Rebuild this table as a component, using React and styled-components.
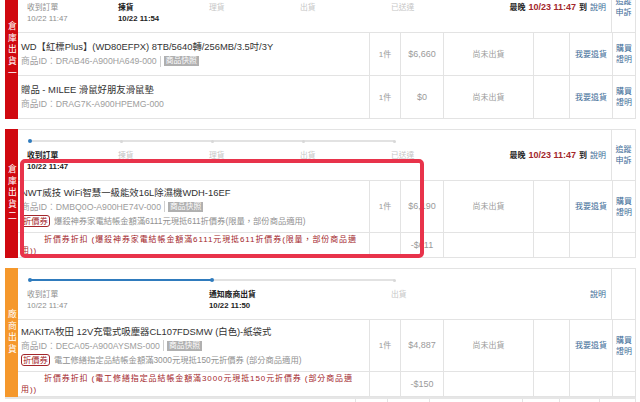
import React from 'react'
import styled, { createGlobalStyle } from 'styled-components'

const c = {
  red: '#d0080f',
  orange: '#f5982c',
  blue: '#2f7bbd',
  track: '#e2e2e2',
  line: '#e3e3e3',
  text: '#333',
  gray: '#8e8e8e',
  light: '#c6c6c6',
  wine: '#a3262b',
  link: '#3b6a96',
  alert: '#e8334b',
}

const GlobalStyle = createGlobalStyle`
  html, body {
    margin: 0;
    padding: 0;
    background: #fff;
    overflow: hidden;
  }
  body {
    font-family: "Liberation Sans", Arial, "Noto Sans CJK TC", sans-serif;
    color: ${c.text};
  }
`

const Page = styled.div`
  width: 631px;
  padding-left: 5px;
  margin-top: -19px;
  display: flex;
  flex-direction: column;
`

const Block = styled.div`
  position: relative;
  display: flex;
  margin-bottom: ${p => (p.$flush ? 0 : 10)}px;
`

const Bar = styled.div`
  width: 13px;
  flex: none;
  background: ${p => (p.$tone === 'orange' ? c.orange : c.red)};
  color: #fff;
  display: flex;
  align-items: center;
  justify-content: center;
`

const BarText = styled.span`
  writing-mode: vertical-rl;
  text-orientation: upright;
  font-size: 8.8px;
  letter-spacing: 3px;
  line-height: 13px;
`

const Table = styled.div`
  flex: 1;
  border-top: 1px solid ${c.line};
  border-right: 1px solid ${c.line};
`

const Head = styled.div`
  display: grid;
  grid-template-columns: 1fr 24px;
  height: 50px;
  border-bottom: 1px solid ${c.line};
`

const HeadMain = styled.div`
  display: flex;
  align-items: flex-start;
  padding: 0 5px 0 9px;
`

const HeadAside = styled.div`
  border-left: 1px solid ${c.line};
  display: flex;
  align-items: center;
  justify-content: center;
  font-size: 8px;
  line-height: 11px;
  color: ${c.link};
  text-align: center;
`

const Steps = styled.div`
  display: flex;
  padding-top: 20px;
`

const stepColor = { done: c.gray, current: '#222', todo: c.light }

const Step = styled.div`
  position: relative;
  flex: none;
  width: ${p => (p.$w ? `${p.$w}px` : 'auto')};
  font-size: 7.8px;
  line-height: 11px;
  color: ${p => stepColor[p.$state]};
  font-weight: ${p => (p.$state === 'current' ? 700 : 400)};
  white-space: nowrap;

  &::before {
    content: '';
    display: ${p => (p.$w ? 'block' : 'none')};
    position: absolute;
    top: -10px;
    left: 3px;
    width: ${p => p.$w || 0}px;
    height: 2px;
    background: ${p => (p.$fill ? c.blue : c.track)};
  }

  &::after {
    content: '';
    position: absolute;
    top: ${p => (p.$state === 'todo' ? -10.5 : -11)}px;
    left: ${p => (p.$state === 'todo' ? 1.5 : 1)}px;
    width: ${p => (p.$state === 'todo' ? 3 : 4)}px;
    height: ${p => (p.$state === 'todo' ? 3 : 4)}px;
    border-radius: 50%;
    background: ${p => (p.$state === 'todo' ? '#d8d8d8' : c.blue)};
  }
`

const StepTime = styled.div`
  font-size: 7.8px;
`

const Deadline = styled.div`
  margin-left: auto;
  padding-top: 20px;
  font-size: 8px;
  line-height: 11px;
  white-space: nowrap;
  display: flex;
  align-items: baseline;
  gap: 3px;
`

const Strong = styled.b`
  color: #222;
`

const Due = styled.b`
  color: ${c.wine};
  font-size: 9px;
`

const Link = styled.span`
  color: ${c.link};
`

const Row = styled.div`
  display: grid;
  grid-template-columns: 351px 31px 43px 90px 36px 43px 1fr;
  min-height: ${p => p.$min || 42}px;
  border-bottom: 1px solid ${c.line};
`

const Cell = styled.div`
  border-left: 1px solid ${c.line};
  display: flex;
  align-items: center;
  justify-content: center;
  text-align: center;
  font-size: ${p => (p.$num ? 9 : 8)}px;
  line-height: 11px;
  color: ${p => (p.$link ? c.link : '#9a9a9a')};

  &:first-child {
    border-left: none;
  }
`

const Product = styled.div`
  display: flex;
  flex-direction: column;
  justify-content: center;
  padding: 4px 4px 4px 3px;
`

const Name = styled.div`
  font-size: 9.4px;
  line-height: 14px;
  color: ${c.text};
  white-space: nowrap;
`

const Meta = styled.div`
  display: flex;
  align-items: center;
  font-size: 8.7px;
  line-height: 14px;
  color: #9d9d9d;
  white-space: nowrap;
`

const Snapshot = styled.span`
  margin-left: 3px;
  padding-left: 3px;
  border-left: 1px solid #cfcfcf;
  display: flex;
  align-items: center;
  height: 11px;

  span {
    background: #b0b0b0;
    color: #fff;
    font-size: 7.8px;
    line-height: 10px;
    padding: 0 2px;
  }
`

const Coupon = styled.div`
  display: flex;
  align-items: center;
  font-size: 8.3px;
  line-height: 14px;
  color: #909090;
  white-space: nowrap;
`

const CouponTag = styled.span`
  border: 1px solid ${c.wine};
  border-radius: 3px;
  color: ${c.wine};
  font-size: 8.3px;
  line-height: 10px;
  padding: 0 1px;
  margin-right: 4px;
`

const Discount = styled.div`
  padding: 1px 9px 0 3px;
  text-indent: 23px;
  font-size: 8px;
  line-height: 11px;
  letter-spacing: 0.9px;
  color: ${c.wine};
`

const Highlight = styled.div`
  position: absolute;
  top: 30px;
  left: 15px;
  width: 404px;
  height: 99px;
  box-sizing: border-box;
  border: 4.5px solid ${c.alert};
  border-radius: 5px;
  pointer-events: none;
  z-index: 2;
`

const Tail = styled.div`
  display: grid;
  grid-template-columns: 350px 32px 42px 93px 37px 40px 37px;
  height: 8px;
  border-top: 2px solid #e6e6e6;
`

const TailCell = styled.div`
  border-left: 1px solid ${c.line};
  &:first-child {
    border-left: none;
  }
  &:last-child {
    border-right: 1px solid ${c.line};
  }
`

const blocks = [
  {
    tone: 'red',
    label: '倉庫出貨一',
    stepWidth: 91,
    steps: [
      { name: '收到訂單', time: '10/22 11:47', state: 'done' },
      { name: '揀貨', time: '10/22 11:54', state: 'current' },
      { name: '理貨', state: 'todo' },
      { name: '出貨', state: 'todo' },
      { name: '已送達', state: 'todo' },
    ],
    deadline: '10/23 11:47',
    appeal: true,
    items: [
      {
        name: 'WD【紅標Plus】(WD80EFPX) 8TB/5640轉/256MB/3.5吋/3Y',
        id: 'DRAB46-A900HA649-000',
        snapshot: true,
        price: '$6,660',
      },
      {
        name: '贈品 - MILEE 滑鼠好朋友滑鼠墊',
        id: 'DRAG7K-A900HPEMG-000',
        price: '$0',
      },
    ],
  },
  {
    tone: 'red',
    label: '倉庫出貨二',
    stepWidth: 91,
    steps: [
      { name: '收到訂單', time: '10/22 11:47', state: 'current' },
      { name: '揀貨', state: 'todo' },
      { name: '理貨', state: 'todo' },
      { name: '出貨', state: 'todo' },
      { name: '已送達', state: 'todo' },
    ],
    deadline: '10/23 11:47',
    appeal: true,
    highlight: true,
    items: [
      {
        name: 'NWT威技 WiFi智慧一級能效16L除濕機WDH-16EF',
        id: 'DMBQ0O-A900HE74V-000',
        snapshot: true,
        price: '$6,190',
        coupon: '爆殺神券家電結帳金額滿6111元現抵611折價券(限量，部份商品適用)',
        off: '-$611',
      },
    ],
  },
  {
    tone: 'orange',
    label: '廠商出貨',
    stepWidth: 182,
    steps: [
      { name: '收到訂單', time: '10/22 11:47', state: 'done' },
      { name: '通知廠商出貨', time: '10/22 11:50', state: 'current' },
      { name: '出貨', state: 'todo' },
    ],
    flush: true,
    items: [
      {
        name: 'MAKITA牧田 12V充電式吸塵器CL107FDSMW (白色)-紙袋式',
        id: 'DECA05-A900AYSMS-000',
        snapshot: true,
        price: '$4,887',
        coupon: '電工修繕指定品結帳金額滿3000元現抵150元折價券 (部分商品適用)',
        off: '-$150',
      },
    ],
  },
]

function Progress({ steps, width }) {
  return (
    <Steps>
      {steps.map((s, i) => {
        const next = steps[i + 1]
        return (
          <Step
            key={s.name}
            $w={next ? width : 0}
            $state={s.state}
            $fill={next && next.state !== 'todo'}
          >
            <div>{s.name}</div>
            {s.time && <StepTime>{s.time}</StepTime>}
          </Step>
        )
      })}
    </Steps>
  )
}

function Item({ item }) {
  return (
    <>
      <Row $min={item.coupon ? 51 : 42}>
        <Product>
          <Name>{item.name}</Name>
          <Meta>
            商品ID：{item.id}
            {item.snapshot && (
              <Snapshot>
                <span>商品快照</span>
              </Snapshot>
            )}
          </Meta>
          {item.coupon && (
            <Coupon>
              <CouponTag>折價券</CouponTag>
              {item.coupon}
            </Coupon>
          )}
        </Product>
        <Cell>1件</Cell>
        <Cell $num>{item.price}</Cell>
        <Cell>尚未出貨</Cell>
        <Cell />
        <Cell $link>我要退貨</Cell>
        <Cell $link>購買證明</Cell>
      </Row>
      {item.coupon && (
        <Row $min={24}>
          <Discount>折價券折扣 ({item.coupon})</Discount>
          <Cell />
          <Cell $num>{item.off}</Cell>
          <Cell />
          <Cell />
          <Cell />
          <Cell />
        </Row>
      )}
    </>
  )
}

export default function App() {
  return (
    <>
      <GlobalStyle />
      <Page>
        {blocks.map(b => (
          <Block key={b.label} $flush={b.flush}>
            <Bar $tone={b.tone}>
              <BarText>{b.label}</BarText>
            </Bar>
            <Table>
              <Head>
                <HeadMain>
                  <Progress steps={b.steps} width={b.stepWidth} />
                  <Deadline>
                    {b.deadline && (
                      <>
                        <Strong>最晚</Strong>
                        <Due>{b.deadline}</Due>
                        <Strong>到</Strong>
                      </>
                    )}
                    <Link>說明</Link>
                  </Deadline>
                </HeadMain>
                <HeadAside>{b.appeal ? '追蹤申訴' : ''}</HeadAside>
              </Head>
              {b.items.map(item => (
                <Item key={item.id} item={item} />
              ))}
            </Table>
            {b.highlight && <Highlight />}
          </Block>
        ))}
        <Tail>
          {Array.from({ length: 7 }, (_, i) => (
            <TailCell key={i} />
          ))}
        </Tail>
      </Page>
    </>
  )
}
